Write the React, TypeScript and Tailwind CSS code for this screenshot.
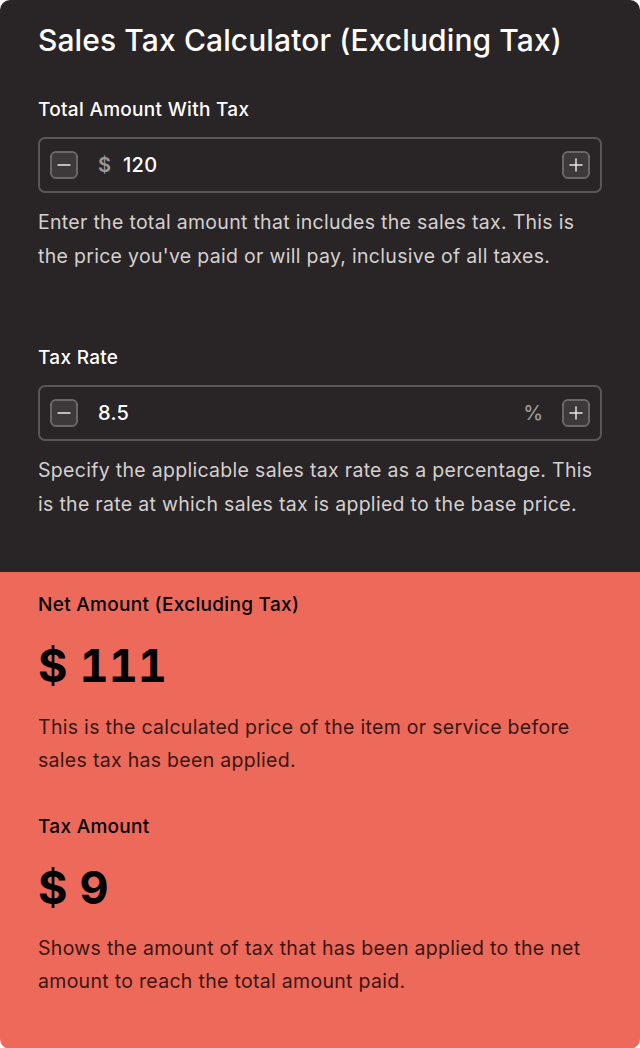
import React from 'react'

const Stepper = ({ sign }: { sign: 'minus' | 'plus' }) => (
  <button className="flex h-[28px] w-[28px] shrink-0 items-center justify-center rounded-[6px] border-2 border-[#6b6768] bg-[#3d393a]">
    <svg width="16" height="16" viewBox="0 0 16 16" stroke="#e8e6e6" strokeWidth="1.5" strokeLinecap="round">
      <line x1="2" y1="8" x2="14" y2="8" />
      {sign === 'plus' && <line x1="8" y1="2" x2="8" y2="14" />}
    </svg>
  </button>
)

const App = () => {
  return (
    <div className="min-h-[1048px] bg-white font-['Inter',sans-serif]">
      <div className="overflow-hidden rounded-[10px]">
        <section className="bg-[#292425] px-[38px] pt-[21px] pb-[51px]">
          <h1 className="text-[30px] leading-[38px] font-medium tracking-[0.1px] text-white">
            Sales Tax Calculator (Excluding Tax)
          </h1>

          <label className="mt-[38px] block text-[19px] leading-[26px] font-medium tracking-[0.3px] text-white">
            Total Amount With Tax
          </label>
          <div className="mt-[14px] flex h-[56px] items-center rounded-[7px] border-2 border-[#5b5758] px-[10px]">
            <Stepper sign="minus" />
            <span className="ml-[20px] text-[20px] font-semibold text-[#9b9798]">$</span>
            <span className="ml-[12px] text-[20px] font-medium tracking-[0.3px] text-white">120</span>
            <div className="flex-1" />
            <Stepper sign="plus" />
          </div>
          <p className="mt-[12px] text-[19.5px] leading-[34px] tracking-[0.3px] text-[#d4d0d0]">
            Enter the total amount that includes the sales tax. This is the price you've paid or will pay, inclusive of all taxes.
          </p>

          <label className="mt-[72px] block text-[19px] leading-[26px] font-medium tracking-[0.3px] text-white">
            Tax Rate
          </label>
          <div className="mt-[14px] flex h-[56px] items-center rounded-[7px] border-2 border-[#5b5758] px-[10px]">
            <Stepper sign="minus" />
            <span className="ml-[20px] text-[20px] font-medium tracking-[0.3px] text-white">8.5</span>
            <div className="flex-1" />
            <span className="mr-[19px] text-[20px] font-medium text-[#9b9798]">%</span>
            <Stepper sign="plus" />
          </div>
          <p className="mt-[12px] text-[19.5px] leading-[34px] tracking-[0.3px] text-[#d4d0d0]">
            Specify the applicable sales tax rate as a percentage. This is the rate at which sales tax is applied to the base price.
          </p>
        </section>

        <section className="bg-[#ed695a] px-[38px] pt-[20px] pb-[51px]">
          <h2 className="text-[19px] leading-[26px] font-medium tracking-[0.3px] text-black">
            Net Amount (Excluding Tax)
          </h2>
          <p className="mt-[20px] text-[45px] leading-[56px] font-bold tabular-nums text-black">$ 111</p>
          <p className="mt-[17px] text-[19.5px] leading-[33px] tracking-[0.3px] text-[#3a1511]">
            This is the calculated price of the item or service before sales tax has been applied.
          </p>

          <h2 className="mt-[37px] text-[19px] leading-[26px] font-medium tracking-[0.3px] text-black">Tax Amount</h2>
          <p className="mt-[20px] text-[45px] leading-[56px] font-bold tabular-nums text-black">$ 9</p>
          <p className="mt-[16px] text-[19.5px] leading-[33px] tracking-[0.3px] text-[#3a1511]">
            Shows the amount of tax that has been applied to the net amount to reach the total amount paid.
          </p>
        </section>
      </div>
    </div>
  )
}

export default App
